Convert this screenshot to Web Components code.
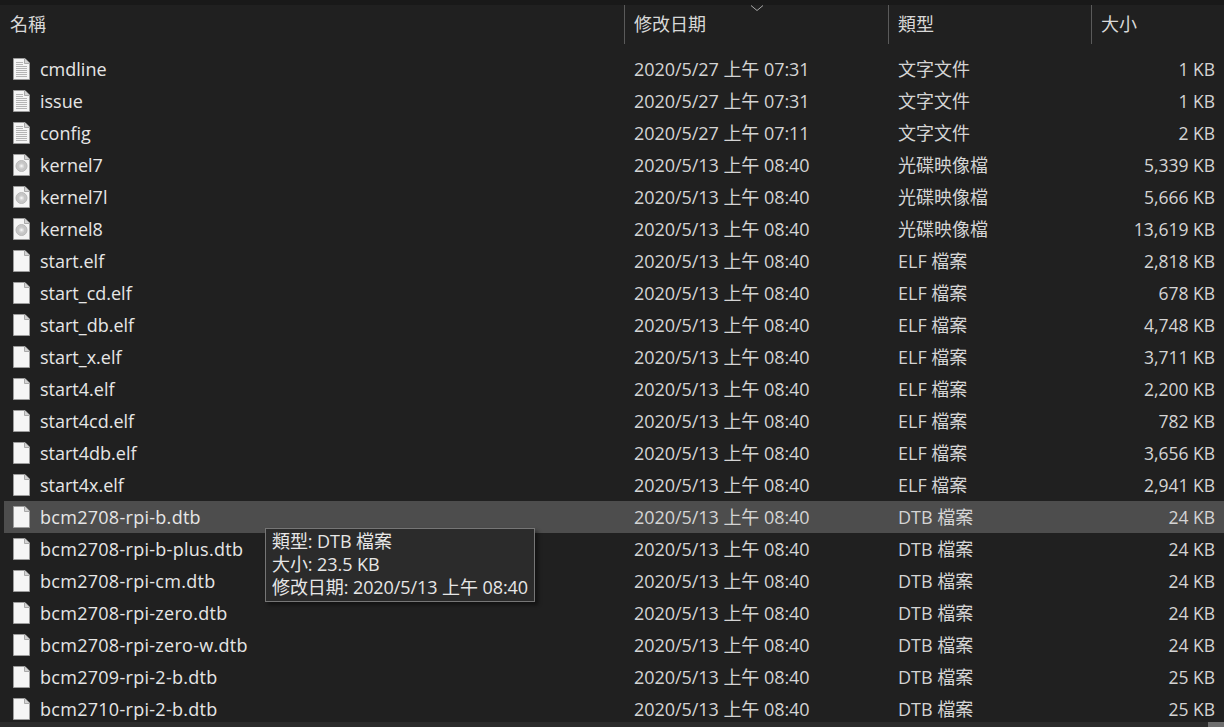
<!DOCTYPE html>
<html lang="zh-Hant">
<head>
<meta charset="utf-8">
<style>
  html, body { margin: 0; height: 100%; background: #202020; overflow: hidden; }
  body { font-family: "Open Sans", "Noto Sans CJK TC", sans-serif; }
</style>
</head>
<body>
<file-list></file-list>

<script>
const UI_FONT = `"Open Sans", "Noto Sans CJK TC", sans-serif`;

const SHEET = `<path d="M.5.5h11.5l4.500 4.500v16.500H.5z" fill="#f5f5f5" stroke="#9c9c9c"/><path d="M11.500.5v5h5" fill="#d4d4d4" stroke="#a8a8a8"/>`;

// doc = lined text file, disc = image file, blank = plain file
const ICONS = {
  doc: `${SHEET}<path d="M3 4.500h7M3 6.500h7M3 8.500h11M3 10.500h11M3 12.500h11M3 14.500h11M3 16.500h11M3 18.500h11" stroke="#b4b4b4" fill="none"/>`,
  disc: `${SHEET}<circle cx="8.500" cy="12" r="5.500" fill="#c6c6c6" stroke="#b8b8b8"/><circle cx="8.500" cy="12" r="2.600" fill="#d8d8d8"/><circle cx="8.500" cy="12" r="1.200" fill="#f4f4f4"/>`,
  blank: SHEET
};

class FileIcon extends HTMLElement {
  constructor() {
    super();
    this.attachShadow({ mode: 'open' });
  }
  connectedCallback() {
    const kind = this.getAttribute('kind') || 'blank';
    this.shadowRoot.innerHTML = `
      <style>
        :host { display: block; width: 17px; height: 22px; }
        svg { display: block; }
      </style>
      <svg width="17" height="22" viewBox="0 0 17 22">${ICONS[kind]}</svg>`;
  }
}

class HeaderCell extends HTMLElement {
  constructor() {
    super();
    this.attachShadow({ mode: 'open' });
    this.shadowRoot.innerHTML = `
      <style>
        :host {
          display: block;
          box-sizing: border-box;
          height: 39px;
          padding-left: 9px;
          border-right: 1px solid #5a5a5a;
          color: #d8d8d8;
          font-size: 18px;
          line-height: 38px;
        }
        :host([first]) { padding-left: 10px; }
        :host([last]) { border-right: 0; }
      </style>
      <slot></slot>`;
  }
}

class FileHeader extends HTMLElement {
  constructor() {
    super();
    this.attachShadow({ mode: 'open' });
    this.shadowRoot.innerHTML = `
      <style>
        :host {
          display: grid;
          grid-template-columns: 625px 264px 203px 1fr;
          position: relative;
          height: 39px;
          background: #202020;
        }
        svg { position: absolute; left: 750px; top: 0; }
      </style>
      <header-cell first>名稱</header-cell>
      <header-cell>修改日期</header-cell>
      <header-cell>類型</header-cell>
      <header-cell last>大小</header-cell>
      <svg width="14" height="7" viewBox="0 0 14 7"><path d="M1 .5l6 5 6-5" fill="none" stroke="#a8a8a8"/></svg>`;
  }
}

class FileRow extends HTMLElement {
  constructor() {
    super();
    this.attachShadow({ mode: 'open' });
  }
  connectedCallback() {
    const a = n => this.getAttribute(n) || '';
    const track = a('name').startsWith('bcm') ? '.28px' : '0';
    this.shadowRoot.innerHTML = `
      <style>
        :host {
          display: grid;
          grid-template-columns: 36px 594px 264px 203px 1fr;
          align-items: center;
          height: 32px;
          margin-left: 4px;
          color: #e6e6e6;
          font-size: 18px;
          line-height: 32px;
          white-space: nowrap;
        }
        :host([hot]) { background: #4d4d4d; }
        file-icon { margin-left: 9px; }
        .name { letter-spacing: ${track}; }
        .muted { color: #d4d4d4; }
        .date { letter-spacing: -.05px; }
        .size { text-align: right; padding-right: 9px; font-size: 17.5px; }
      </style>
      <file-icon kind="${a('icon')}"></file-icon>
      <span class="name">${a('name')}</span>
      <span class="muted date">${a('date')}</span>
      <span class="muted">${a('type')}</span>
      <span class="muted size">${a('size')}</span>`;
  }
}

class FileTip extends HTMLElement {
  constructor() {
    super();
    this.attachShadow({ mode: 'open' });
    this.shadowRoot.innerHTML = `
      <style>
        :host {
          position: absolute;
          left: 265px;
          top: 528px;
          box-sizing: border-box;
          width: 270px;
          height: 74px;
          padding: 1px 6px;
          background: #2b2b2b;
          border: 1px solid #767676;
          box-shadow: 3px 3px 4px rgba(0, 0, 0, .45);
          color: #e6e6e6;
          font-size: 18px;
          line-height: 23px;
          letter-spacing: -.08px;
          white-space: nowrap;
        }
        div { height: 23px; }
      </style>
      <div>類型: DTB 檔案</div>
      <div>大小: 23.5 KB</div>
      <div>修改日期: 2020/5/13 上午 08:40</div>`;
  }
}

const FILES = [
  ['doc', 'cmdline', '2020/5/27 上午 07:31', '文字文件', '1 KB'],
  ['doc', 'issue', '2020/5/27 上午 07:31', '文字文件', '1 KB'],
  ['doc', 'config', '2020/5/27 上午 07:11', '文字文件', '2 KB'],
  ['disc', 'kernel7', '2020/5/13 上午 08:40', '光碟映像檔', '5,339 KB'],
  ['disc', 'kernel7l', '2020/5/13 上午 08:40', '光碟映像檔', '5,666 KB'],
  ['disc', 'kernel8', '2020/5/13 上午 08:40', '光碟映像檔', '13,619 KB'],
  ['blank', 'start.elf', '2020/5/13 上午 08:40', 'ELF 檔案', '2,818 KB'],
  ['blank', 'start_cd.elf', '2020/5/13 上午 08:40', 'ELF 檔案', '678 KB'],
  ['blank', 'start_db.elf', '2020/5/13 上午 08:40', 'ELF 檔案', '4,748 KB'],
  ['blank', 'start_x.elf', '2020/5/13 上午 08:40', 'ELF 檔案', '3,711 KB'],
  ['blank', 'start4.elf', '2020/5/13 上午 08:40', 'ELF 檔案', '2,200 KB'],
  ['blank', 'start4cd.elf', '2020/5/13 上午 08:40', 'ELF 檔案', '782 KB'],
  ['blank', 'start4db.elf', '2020/5/13 上午 08:40', 'ELF 檔案', '3,656 KB'],
  ['blank', 'start4x.elf', '2020/5/13 上午 08:40', 'ELF 檔案', '2,941 KB'],
  ['blank', 'bcm2708-rpi-b.dtb', '2020/5/13 上午 08:40', 'DTB 檔案', '24 KB', true],
  ['blank', 'bcm2708-rpi-b-plus.dtb', '2020/5/13 上午 08:40', 'DTB 檔案', '24 KB'],
  ['blank', 'bcm2708-rpi-cm.dtb', '2020/5/13 上午 08:40', 'DTB 檔案', '24 KB'],
  ['blank', 'bcm2708-rpi-zero.dtb', '2020/5/13 上午 08:40', 'DTB 檔案', '24 KB'],
  ['blank', 'bcm2708-rpi-zero-w.dtb', '2020/5/13 上午 08:40', 'DTB 檔案', '24 KB'],
  ['blank', 'bcm2709-rpi-2-b.dtb', '2020/5/13 上午 08:40', 'DTB 檔案', '25 KB'],
  ['blank', 'bcm2710-rpi-2-b.dtb', '2020/5/13 上午 08:40', 'DTB 檔案', '25 KB']
];

class FileList extends HTMLElement {
  constructor() {
    super();
    this.attachShadow({ mode: 'open' });
  }
  connectedCallback() {
    const rows = FILES.map(([icon, name, date, type, size, hot]) =>
      `<file-row icon="${icon}" name="${name}" date="${date}" type="${type}" size="${size}"${hot ? ' hot' : ''}></file-row>`
    ).join('');
    this.shadowRoot.innerHTML = `
      <style>
        :host {
          display: flex;
          flex-direction: column;
          position: relative;
          height: 727px;
          overflow: hidden;
          font-family: ${UI_FONT};
        }
        .top { flex: none; height: 5px; background: #191919; }
        .rows { flex: 1; min-height: 0; overflow: hidden; padding-top: 9px; }
        .scroll { flex: none; display: flex; justify-content: flex-end; height: 5px; background: #2b2b2b; }
        .thumb { width: 16px; background: #6e6e6e; }
      </style>
      <div class="top"></div>
      <file-header></file-header>
      <div class="rows">${rows}</div>
      <div class="scroll"><div class="thumb"></div></div>
      <file-tip></file-tip>`;
  }
}

customElements.define('file-icon', FileIcon);
customElements.define('header-cell', HeaderCell);
customElements.define('file-header', FileHeader);
customElements.define('file-row', FileRow);
customElements.define('file-tip', FileTip);
customElements.define('file-list', FileList);
</script>
</body>
</html>
